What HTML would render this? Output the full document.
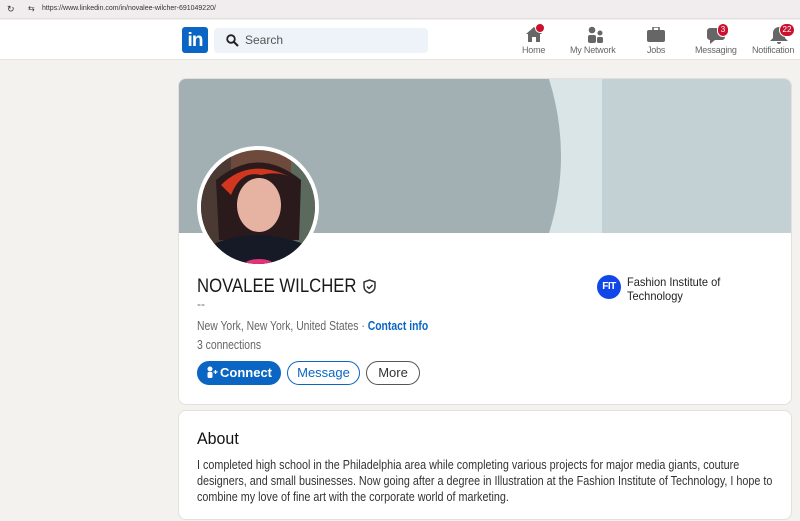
<!DOCTYPE html>
<html><head><meta charset="utf-8"><style>
*{margin:0;padding:0;box-sizing:border-box}
body{width:800px;height:521px;overflow:hidden;background:#f4f2ee;font-family:"Liberation Sans",sans-serif;position:relative;color:#191919}
.url{position:absolute;top:0;left:0;width:800px;height:19px;background:#f1edee;border-bottom:1px solid #e2dfdf;font-size:7px;color:#333}
.nav{position:absolute;top:20px;left:0;width:800px;height:40px;background:#fff;border-bottom:1px solid #e6e3df}
.ab{position:absolute}
.card{position:absolute;left:178px;width:614px;background:#fff;border-radius:8px;border:1px solid #e3e0dc;overflow:hidden}
.nv{position:absolute;top:44px;font-size:9px;color:#666;letter-spacing:-.2px;white-space:nowrap}
.badge{position:absolute;background:#cb112d;color:#fff;border-radius:7px;font-size:8px;text-align:center;line-height:12px;height:12px;border:1.5px solid #fff;box-sizing:content-box}
.btn{position:absolute;top:361px;height:24px;border-radius:12px;font-size:13px;line-height:22px;text-align:center;font-weight:bold}
.sq{transform:scaleX(.85);transform-origin:0 0;white-space:nowrap}
</style></head><body>
<div class="url"><span class="ab" style="left:7px;top:4px;font-size:9px">↻</span><span class="ab" style="left:28px;top:4px;font-size:8px">⇆</span><span class="ab" style="left:42px;top:5px">https://www.linkedin.com/in/novalee-wilcher-691049220/</span></div>
<div class="nav">
 <div class="ab" style="left:182px;top:7px;width:26px;height:26px;background:#0a66c2;border-radius:3px;color:#fff;font-weight:bold;font-size:19px;line-height:27px;text-align:center;letter-spacing:-1px">in</div>
 <div class="ab" style="left:214px;top:8px;width:214px;height:25px;background:#edf3f8;border-radius:4px;font-size:12px;color:#555;line-height:25px;padding-left:31px">Search</div>
 <svg class="ab" style="left:226px;top:14px" width="13" height="13" viewBox="0 0 13 13"><circle cx="5" cy="5" r="3.8" fill="none" stroke="#222" stroke-width="1.8"/><path d="M8 8l4 4" stroke="#222" stroke-width="2"/></svg>
 <svg class="ab" style="left:525px;top:6px" width="18" height="16"><path d="M9 1L1 8h2v8h4v-5h4v5h4V8h2z" fill="#666"/></svg>
 <div class="badge" style="left:535px;top:3px;width:8px;height:8px;border-radius:6px;font-size:0"></div>
 <div class="nv" style="left:522px;top:25px">Home</div>
 <svg class="ab" style="left:586px;top:6px" width="18" height="17"><circle cx="6" cy="4" r="3.3" fill="#666"/><rect x="2" y="9" width="8" height="8" rx="2" fill="#666"/><circle cx="14" cy="7" r="2.5" fill="#666"/><rect x="11" y="11" width="6" height="6" rx="1.5" fill="#666"/></svg>
 <div class="nv" style="left:570px;top:25px">My Network</div>
 <svg class="ab" style="left:647px;top:7px" width="18" height="15"><rect x="6" y="0" width="6" height="4" rx="1" fill="none" stroke="#666" stroke-width="1.6"/><rect x="0" y="3" width="18" height="12" rx="2" fill="#666"/></svg>
 <div class="nv" style="left:647px;top:25px">Jobs</div>
 <svg class="ab" style="left:707px;top:7px" width="18" height="17"><path d="M3 1h12a3 3 0 013 3v6a3 3 0 01-3 3H8l-5 4v-4a3 3 0 01-3-3V4a3 3 0 013-3z" fill="#666"/></svg>
 <div class="badge" style="left:717px;top:3px;width:10px">3</div>
 <div class="nv" style="left:695px;top:25px">Messaging</div>
 <svg class="ab" style="left:770px;top:7px" width="18" height="17"><path d="M9 0a6 6 0 016 6v5l3 3H0l3-3V6a6 6 0 016-6z M7 15h4a2 2 0 01-4 0z" fill="#666"/></svg>
 <div class="badge" style="left:779px;top:3px;width:14px">22</div>
 <div class="nv" style="left:752px;top:25px">Notification</div>
</div>

<div class="card" style="top:78px;height:327px">
 <svg class="ab" style="left:0;top:0" width="614" height="154"><rect width="614" height="154" fill="#c3d1d4"/><rect width="423" height="154" fill="#d9e5e6"/><path d="M0 0H370Q394 77 370 154H0z" fill="#a2b0b3"/></svg>
</div>
<div class="ab" style="left:197px;top:146px;width:122px;height:122px;border-radius:50%;background:#fff"></div>
<svg class="ab" style="left:201px;top:150px" width="114" height="114" viewBox="0 0 114 114"><defs><clipPath id="c"><circle cx="57" cy="57" r="57"/></clipPath></defs><g clip-path="url(#c)"><rect width="114" height="114" fill="#6d4a3c"/><rect x="0" y="0" width="30" height="114" fill="#4a3a33"/><rect x="90" y="0" width="24" height="114" fill="#5b6a5c"/><path d="M15 30Q57 -5 100 30L98 90H18z" fill="#2a1a1c"/><ellipse cx="58" cy="55" rx="22" ry="27" fill="#e6b2a2"/><path d="M20 35Q50 5 95 30Q80 20 60 25Q40 20 30 45z" fill="#d3361e"/><path d="M10 95Q57 75 105 95V114H10z" fill="#161a26"/><ellipse cx="58" cy="114" rx="14" ry="5" fill="#e0337a"/></g></svg>

<div class="ab sq" style="left:197px;top:276px;font-size:19px;color:#191919;transform:scaleX(.88)">NOVALEE WILCHER</div>
<svg class="ab" style="left:362px;top:279px" width="15" height="15" viewBox="0 0 15 15"><path d="M7.5 1L13 3v4.5c0 3.3-2.5 5.5-5.5 6.5C4.5 13 2 10.8 2 7.5V3z" fill="none" stroke="#333" stroke-width="1.5"/><path d="M5 7.5l2 2 3.5-3.5" fill="none" stroke="#333" stroke-width="1.5"/></svg>
<div class="ab" style="left:197px;top:297px;font-size:12px;color:#666">--</div>
<div class="ab sq" style="left:197px;top:319px;font-size:12.5px;color:#666;transform:scaleX(.83)">New York, New York, United States · <b style="color:#0a66c2">Contact info</b></div>
<div class="ab sq" style="left:197px;top:338px;font-size:12.5px;color:#666;transform:scaleX(.83)">3 connections</div>
<div class="btn" style="left:197px;width:84px;background:#0a66c2;color:#fff;border:1px solid #0a66c2"><svg width="12" height="12" style="vertical-align:-1px;margin-right:2px"><circle cx="4" cy="3" r="2.5" fill="#fff"/><rect x="1.5" y="6" width="5" height="6" rx="1.5" fill="#fff"/><path d="M9.5 4v4M7.5 6h4" stroke="#fff" stroke-width="1.2"/></svg>Connect</div>
<div class="btn" style="left:287px;width:73px;color:#0a66c2;border:1px solid #0a66c2;font-weight:normal">Message</div>
<div class="btn" style="left:366px;width:54px;color:#333;border:1px solid #555;font-weight:normal">More</div>

<div class="ab" style="left:597px;top:275px;width:24px;height:24px;border-radius:50%;background:#1146e8;color:#fff;font-size:10px;line-height:24px;text-align:center;font-weight:bold;letter-spacing:-.5px">FIT</div>
<div class="ab sq" style="left:627px;top:275px;font-size:12px;line-height:14px;color:#222;transform:scaleX(.92)">Fashion Institute of<br>Technology</div>

<div class="card" style="top:410px;height:110px"></div>
<div class="ab sq" style="left:197px;top:429px;font-size:17px;color:#111;transform:scaleX(.94)">About</div>
<div class="ab sq" style="left:197px;top:457px;font-size:13px;line-height:16px;color:#333;transform:scaleX(.83)">I completed high school in the Philadelphia area while completing various projects for major media giants, couture<br>designers, and small businesses. Now going after a degree in Illustration at the Fashion Institute of Technology, I hope to<br>combine my love of fine art with the corporate world of marketing.</div>
</body></html>
